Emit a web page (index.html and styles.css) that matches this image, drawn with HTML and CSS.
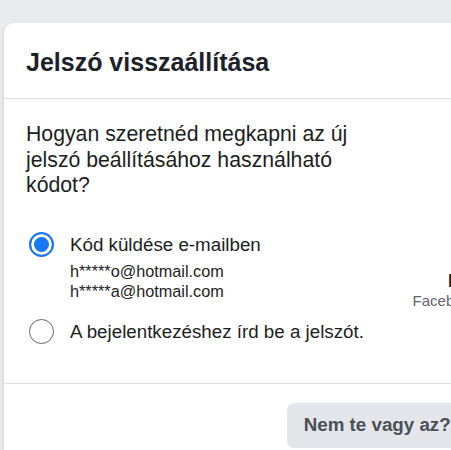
FILE: index.html
```html
<!DOCTYPE html>
<html lang="hu">

<head>
    <meta charset="UTF-8">
    <meta name="viewport" content="width=device-width, initial-scale=1.0">
    <title>Jelszó visszaállítása</title>
    <link rel="stylesheet" href="styles.css">
</head>

<body>
<div class="page">
    <div class="card">
        <div class="card-header">
            <h2>Jelszó visszaállítása</h2>
        </div>
        <div class="card-body">
            <div class="options">
                <p class="question">Hogyan szeretnéd megkapni az új jelszó beállításához használható kódot?</p>
                <label class="option">
                    <input type="radio" name="method" class="radio" checked>
                    <span class="option-text">
                        <span class="option-title">Kód küldése e-mailben</span>
                        <span class="option-detail">h*****o@hotmail.com</span>
                        <span class="option-detail">h*****a@hotmail.com</span>
                    </span>
                </label>
                <label class="option">
                    <input type="radio" name="method" class="radio">
                    <span class="option-text">
                        <span class="option-title">A bejelentkezéshez írd be a jelszót.</span>
                    </span>
                </label>
            </div>
            <div class="profile">
                <div class="profile-name">Hanna K.</div>
                <div class="profile-sub">Facebook-felhasználó</div>
            </div>
        </div>
        <div class="card-footer">
            <button class="btn btn-gray">Nem te vagy az?</button>
            <button class="btn btn-blue">Folytatás</button>
        </div>
    </div>
</div>
</body>

</html>
```

FILE: styles.css
```css
* {
    padding: 0;
    margin: 0;
    box-sizing: border-box;
}

html, body {
    overflow: hidden;
}

body {
    background-color: #e9ebee;
    font-family: "Liberation Sans", Arial, sans-serif;
    color: #1c1e21;
}

.page {
    padding: 23px 0 40px 4px;
}

.card {
    width: 610px;
    background-color: #fff;
    border-radius: 10px;
    box-shadow: 0 1px 2px rgba(0, 0, 0, 0.15), 0 4px 10px rgba(0, 0, 0, 0.06);
}

.card-header {
    padding: 24px 22px 21px;
    border-bottom: 1px solid #dddfe2;
}

.card-header h2 {
    font-size: 25px;
    line-height: 30px;
    font-weight: bold;
    color: #1d2129;
}

.card-body {
    display: flex;
    padding: 23px 22px 39px;
}

.options {
    flex: 0 0 354px;
}

.question {
    font-size: 21.25px;
    line-height: 25.5px;
}

.option {
    display: flex;
    align-items: flex-start;
    cursor: pointer;
}

.option + .option {
    margin-top: 18px;
}

.options .option:first-of-type {
    margin-top: 33px;
}

.radio {
    appearance: none;
    -webkit-appearance: none;
    flex: 0 0 25px;
    width: 25px;
    height: 25px;
    margin: 0 16px 0 3px;
    border-radius: 50%;
    border: 1.5px solid #65676b;
    background-color: #fff;
}

.radio:checked {
    border: 2px solid #1877f2;
    background-color: #1877f2;
    box-shadow: inset 0 0 0 3px #fff;
}

.option-text {
    display: flex;
    flex-direction: column;
}

.option-title {
    font-size: 18.75px;
    line-height: 25px;
}

.option-detail {
    font-size: 16.25px;
    line-height: 20px;
}

.option-title + .option-detail {
    margin-top: 4px;
}

.profile {
    flex: 1;
    text-align: center;
    padding-top: 149px;
    white-space: nowrap;
}

.profile-name {
    font-size: 17.5px;
    line-height: 20px;
    font-weight: bold;
    color: #1d2129;
}

.profile-sub {
    font-size: 15px;
    line-height: 20px;
    color: #606770;
}

.card-footer {
    display: flex;
    justify-content: flex-end;
    gap: 10px;
    padding: 19px 20px 20px;
    border-top: 1px solid #dddfe2;
}

.btn {
    height: 45px;
    padding: 0 17px;
    border: none;
    border-radius: 7px;
    font-family: inherit;
    font-size: 18.75px;
    font-weight: bold;
    cursor: pointer;
}

.btn-gray {
    background-color: #e4e6eb;
    color: #4b4f56;
}

.btn-blue {
    background-color: #1877f2;
    color: #fff;
}
```
